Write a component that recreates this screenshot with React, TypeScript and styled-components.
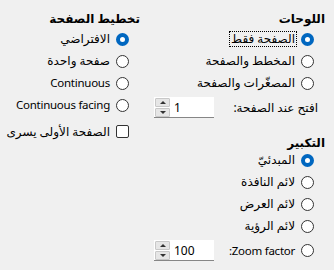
import styled, { createGlobalStyle, css } from 'styled-components';

const GlobalStyle = createGlobalStyle`
  body {
    margin: 0;
    background: #f0f0f0;
  }
`;

function App() {
    return (
        <>
            <GlobalStyle/>
            <Dialog dir="rtl">
                <Column width={172}>
                    <Heading>اللوحات</Heading>
                    <Option><Radio checked/><Text focused>الصفحة فقط</Text></Option>
                    <Option><Radio/><Text>المخطط والصفحة</Text></Option>
                    <Option><Radio/><Text>المصغّرات والصفحة</Text></Option>
                    <SpinRow>
                        <PlainLabel>افتح عند الصفحة:</PlainLabel>
                        <SpinBox value="1"/>
                    </SpinRow>

                    <Heading spaced>التكبير</Heading>
                    <Option><Radio checked/><Text>المبدئيّ</Text></Option>
                    <Option><Radio/><Text>لائم النافذة</Text></Option>
                    <Option><Radio/><Text>لائم العرض</Text></Option>
                    <Option><Radio/><Text>لائم الرؤية</Text></Option>
                    <SpinRow>
                        <Option><Radio/><Text latin>Zoom factor:</Text></Option>
                        <SpinBox value="100"/>
                    </SpinRow>
                </Column>

                <Column width={131}>
                    <Heading>تخطيط الصفحة</Heading>
                    <Option><Radio checked/><Text>الافتراضي</Text></Option>
                    <Option><Radio/><Text>صفحة واحدة</Text></Option>
                    <Option><Radio/><Text latin>Continuous</Text></Option>
                    <Option><Radio/><Text latin>Continuous facing</Text></Option>
                    <Option tall><Check/><Text>الصفحة الأولى يسرى</Text></Option>
                </Column>
            </Dialog>
        </>
    );
}

export default App;


function SpinBox({value}: { value: string }) {
    return (
        <SpinWrapper>
            <SpinButtons>
                <SpinButton><Arrow/></SpinButton>
                <SpinButton><Arrow down/></SpinButton>
            </SpinButtons>
            <SpinValue>{value}</SpinValue>
        </SpinWrapper>
    );
}


const Dialog = styled.div`
  width: 334px;
  height: 270px;
  box-sizing: border-box;
  padding: 8px 9px 0;
  display: flex;
  gap: 14px;
  font-family: "Segoe UI", "Noto Sans", "DejaVu Sans", sans-serif;
  font-size: 12px;
  color: #000;
`;

const Column = styled.div<{ width: number }>`
  width: ${props => props.width}px;
  display: flex;
  flex-direction: column;
`;

const Heading = styled.div<{ spaced?: boolean }>`
  height: 20px;
  box-sizing: border-box;
  padding-top: 2px;
  line-height: 18px;
  font-weight: 700;
  white-space: nowrap;
  ${props => props.spaced && css`
    margin-top: 11px;
    margin-bottom: -3px;
  `}
`;

const Option = styled.label<{ tall?: boolean }>`
  height: 22px;
  display: flex;
  align-items: center;
  gap: 4px;
  padding-right: 11px;
  white-space: nowrap;
  ${props => props.tall && css`
    height: 27px;
    margin-top: 2px;
  `}
`;

const Text = styled.span<{ focused?: boolean, latin?: boolean }>`
  line-height: 14px;
  padding: 0 1px;
  border: 1px dotted transparent;
  ${props => props.focused && css`
    border-color: #000;
  `}
  ${props => props.latin && css`
    font-size: 11.5px;
    letter-spacing: -0.25px;
  `}
`;

const Radio = styled.span<{ checked?: boolean }>`
  flex: none;
  width: 13px;
  height: 13px;
  box-sizing: border-box;
  border-radius: 50%;
  border: 1px solid #333;
  background: #fff;
  ${props => props.checked && css`
    border: 4px solid #0067c0;
  `}
`;

const Check = styled.span`
  flex: none;
  width: 13px;
  height: 13px;
  box-sizing: border-box;
  border-radius: 2px;
  border: 1px solid #333;
  background: #fff;
`;

const SpinRow = styled.div`
  height: 27px;
  display: flex;
  align-items: center;
  justify-content: space-between;
`;

const PlainLabel = styled.span`
  padding-right: 7px;
  white-space: nowrap;
`;

const SpinWrapper = styled.div`
  direction: ltr;
  width: 60px;
  height: 21px;
  box-sizing: border-box;
  display: flex;
  align-items: center;
  background: #fff;
  border-bottom: 1px solid #868686;
`;

const SpinButtons = styled.div`
  width: 15px;
  height: 19px;
  margin-left: 1px;
  display: flex;
  flex-direction: column;
  gap: 1px;
`;

const SpinButton = styled.div`
  flex: 1;
  display: flex;
  align-items: center;
  justify-content: center;
  background: #e6e6e6;
  border: 1px solid #c8c8c8;
  border-radius: 1px;
`;

const Arrow = styled.span<{ down?: boolean }>`
  width: 0;
  height: 0;
  border-left: 3px solid transparent;
  border-right: 3px solid transparent;
  ${props => props.down ? css`
    border-top: 3px solid #333;
  ` : css`
    border-bottom: 3px solid #333;
  `}
`;

const SpinValue = styled.span`
  padding-left: 4px;
  font-size: 12px;
`;
